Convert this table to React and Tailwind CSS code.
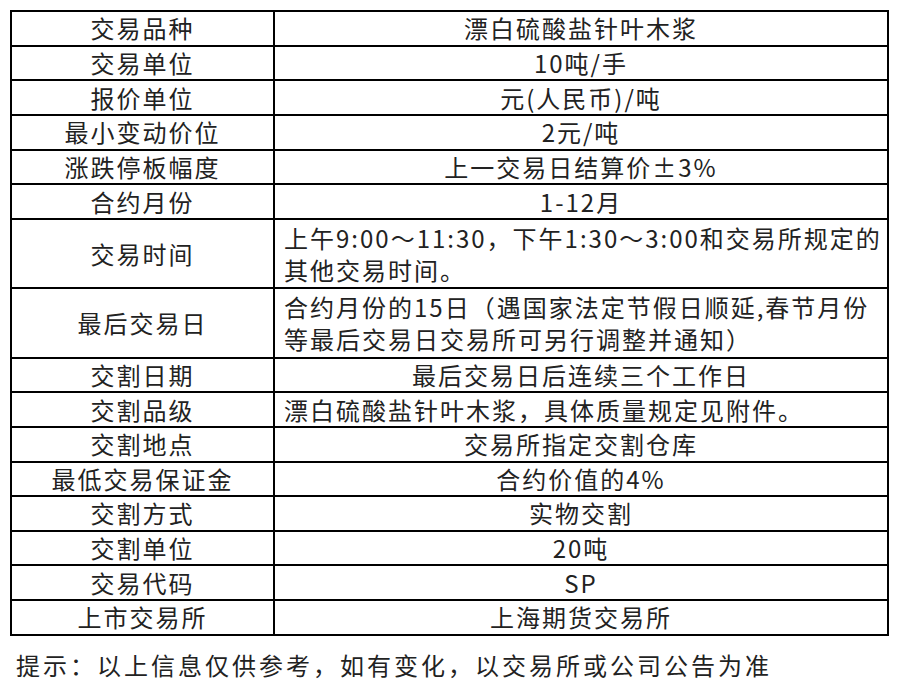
import React from 'react';

const rows = [
    { label: '交易品种', value: '漂白硫酸盐针叶木浆' },
    { label: '交易单位', value: '10吨/手' },
    { label: '报价单位', value: '元(人民币)/吨' },
    { label: '最小变动价位', value: '2元/吨' },
    { label: '涨跌停板幅度', value: '上一交易日结算价±3%' },
    { label: '合约月份', value: '1-12月' },
    { label: '交易时间', value: '上午9:00～11:30，下午1:30～3:00和交易所规定的其他交易时间。', left: true, tall: true },
    { label: '最后交易日', value: '合约月份的15日（遇国家法定节假日顺延,春节月份等最后交易日交易所可另行调整并通知）', left: true, tall: true },
    { label: '交割日期', value: '最后交易日后连续三个工作日' },
    { label: '交割品级', value: '漂白硫酸盐针叶木浆，具体质量规定见附件。', left: true },
    { label: '交割地点', value: '交易所指定交割仓库' },
    { label: '最低交易保证金', value: '合约价值的4%' },
    { label: '交割方式', value: '实物交割' },
    { label: '交割单位', value: '20吨' },
    { label: '交易代码', value: 'SP' },
    { label: '上市交易所', value: '上海期货交易所' },
];

const App = () => {
    return (
        <div
            className="w-[900px] h-[688px] bg-white text-[#222] pt-[10px] pl-[10px]"
            style={{ fontFamily: '"Noto Sans CJK SC", "Noto Sans", sans-serif' }}
        >
            <table className="w-[879px] border-collapse border-2 border-black text-[24px] tracking-[2px]">
                <tbody>
                    {rows.map((r) => (
                        <tr key={r.label} className={r.tall ? 'h-[69.3px]' : 'h-[34.67px]'}>
                            <td className="w-[263px] border-2 border-black text-center leading-[30px] p-0">
                                {r.label}
                            </td>
                            <td
                                className={`border-2 border-black leading-[32px] py-0 ${r.left ? 'text-left pl-[9px] pr-[4px]' : 'text-center px-2'}`}
                            >
                                {r.value}
                            </td>
                        </tr>
                    ))}
                </tbody>
            </table>
            <p className="mt-[12px] ml-[6px] text-[24px] tracking-[3px] leading-[34px]">
                提示：以上信息仅供参考，如有变化，以交易所或公司公告为准
            </p>
        </div>
    );
};

export default App;
